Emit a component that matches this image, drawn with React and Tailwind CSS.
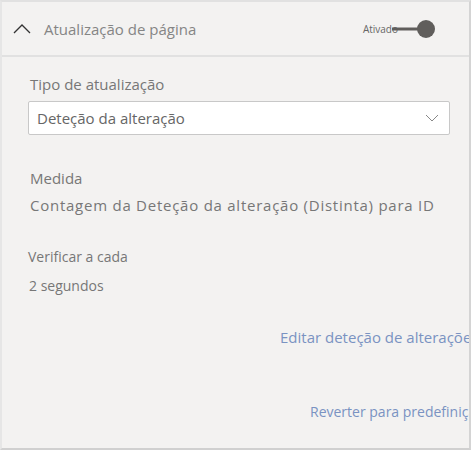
import React from 'react';

const font = { fontFamily: '"Segoe UI", "Open Sans", "Liberation Sans", sans-serif' };

const App = () => {
    return (
        <div className="w-[471px] h-[450px] bg-[#f3f2f1] border-l-2 border-t-2 border-r-2 border-b-2 border-l-[#e6e6e6] border-t-[#e1e1e1] border-r-[#d4d4d4] border-b-[#d0d0d0] overflow-hidden flex flex-col" style={font}>
            {/* Header */}
            <div className="h-[55px] shrink-0 border-b-2 border-[#e1e1e1] flex items-center">
                <svg className="ml-[10px]" width="20" height="12" viewBox="0 0 20 12">
                    <path d="M2 10 L10 2 L18 10" fill="none" stroke="#333" strokeWidth="1.3" />
                </svg>
                <span className="ml-[12px] text-[15px] text-[#858585] leading-[20px]">Atualização de página</span>
                <div className="ml-auto mr-[32px] flex items-center">
                    <span className="text-[10px] text-[#666] leading-[12px]">Ativado</span>
                    <svg className="-ml-[6px]" width="45" height="20" viewBox="0 0 45 20">
                        <line x1="0" y1="10" x2="30" y2="10" stroke="#605e5c" strokeWidth="3" />
                        <circle cx="34" cy="10" r="9" fill="#605e5c" />
                    </svg>
                </div>
            </div>

            {/* Content */}
            <div className="pl-[28px] flex flex-col whitespace-nowrap">
                <div className="mt-[17px] text-[15px] leading-[20px] text-[#777]">Tipo de atualização</div>
                <div className="mt-[7px] -ml-[2px] w-[422px] h-[34px] bg-white border border-[#c8c8c8] rounded-[2px] flex items-center px-[8px]">
                    <span className="text-[15px] text-[#666]">Deteção da alteração</span>
                    <svg className="ml-auto mr-[2px]" width="14" height="8" viewBox="0 0 14 8">
                        <path d="M1 1 L7 7 L13 1" fill="none" stroke="#888" strokeWidth="1" />
                    </svg>
                </div>
                <div className="mt-[33px] text-[15px] leading-[20px] text-[#777]">Medida</div>
                <div className="mt-[7px] text-[15px] leading-[20px] text-[#777] tracking-[0.75px]">Contagem da Deteção da alteração (Distinta) para ID</div>
                <div className="mt-[32px] -ml-[2px] text-[14px] leading-[20px] text-[#777]">Verificar a cada</div>
                <div className="mt-[9px] -ml-[1px] text-[14px] leading-[20px] text-[#777]">2 segundos</div>
                <div className="mt-[31px] pl-[250px] text-[15px] leading-[20px] text-[#7a93c2]">Editar deteção de alterações</div>
                <div className="mt-[55px] pl-[280px] text-[14px] leading-[20px] text-[#7a93c2]">Reverter para predefinição</div>
            </div>
        </div>
    );
};

export default App;
